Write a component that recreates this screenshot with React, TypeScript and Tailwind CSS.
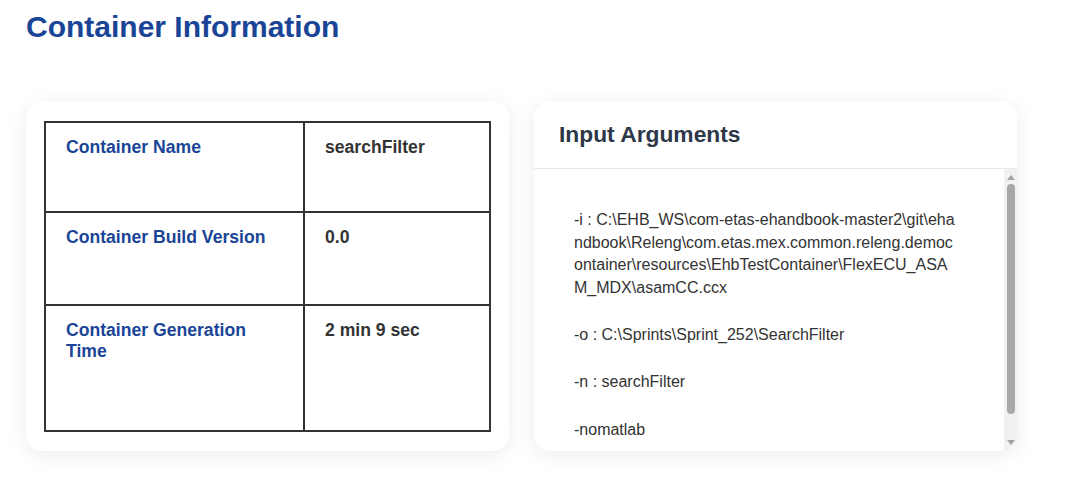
const rows = [
  { label: "Container Name", value: "searchFilter", h: "h-[88px]" },
  { label: "Container Build Version", value: "0.0", h: "h-[93px] border-t-2" },
  { label: "Container Generation Time", value: "2 min 9 sec", h: "h-[126px] border-t-2" },
];

// wrapped the same way the original break-all box wraps them
const args = [
  [
    "-i : C:\\EHB_WS\\com-etas-ehandbook-master2\\git\\eha",
    "ndbook\\Releng\\com.etas.mex.common.releng.democ",
    "ontainer\\resources\\EhbTestContainer\\FlexECU_ASA",
    "M_MDX\\asamCC.ccx",
  ],
  ["-o : C:\\Sprints\\Sprint_252\\SearchFilter"],
  ["-n : searchFilter"],
  ["-nomatlab"],
];

const App = () => {
  return (
    <div
      className="min-h-screen bg-white px-[26px] pt-[9px]"
      style={{ fontFamily: '"Liberation Sans", Arial, sans-serif' }}
    >
      <h1 className="text-[30px] font-bold leading-[1.2] text-[#1a4597]">
        Container Information
      </h1>

      <div className="mt-[56px] grid grid-cols-[483px_483px] grid-rows-[350px] gap-[25px]">
        {/* left card: details table */}
        <div className="rounded-2xl bg-white px-[18px] pt-5 pb-[19px] shadow-[0_4px_20px_rgba(0,0,0,0.08)]">
          <div className="border-2 border-[#333]">
            {rows.map((r) => (
              <div
                key={r.label}
                className={`grid grid-cols-[257px_1fr] border-[#333] ${r.h}`}
              >
                <div className="px-5 pt-[13.5px] text-[17.6px] font-bold leading-[1.2] text-[#1a4597]">
                  {r.label}
                </div>
                <div className="border-l-2 border-[#333] px-5 pt-[13.5px] text-[17.6px] font-bold leading-[1.2] text-[#333]">
                  {r.value}
                </div>
              </div>
            ))}
          </div>
        </div>

        {/* right card: input arguments */}
        <div className="flex min-h-0 flex-col overflow-hidden rounded-2xl bg-white shadow-[0_4px_20px_rgba(0,0,0,0.08)]">
          <div className="border-b border-[#e8e8e8] px-[25px] py-5">
            <h2 className="text-[22.8px] font-bold leading-[1.2] text-[#2d3748]">
              Input Arguments
            </h2>
          </div>
          <div className="flex min-h-0 flex-1">
            <div className="flex-1 overflow-hidden pl-10 pr-[40px] pt-[40px]">
              {args.map((lines) => (
                <p
                  key={lines[0]}
                  className="mb-[25px] whitespace-nowrap text-base leading-[1.4] text-[#333]"
                >
                  {lines.map((l) => (
                    <span key={l} className="block">
                      {l}
                    </span>
                  ))}
                </p>
              ))}
            </div>
            {/* scrollbar */}
            <div className="flex w-[13px] flex-col items-center bg-[#f1f1f1] py-[6px]">
              <div className="h-0 w-0 border-x-[4px] border-b-[5px] border-x-transparent border-b-[#a3a3a3]" />
              <div className="mt-[4px] h-[230px] w-[8px] rounded-full bg-[#a8a8a8]" />
              <div className="mt-auto h-0 w-0 border-x-[4px] border-t-[5px] border-x-transparent border-t-[#a3a3a3]" />
            </div>
          </div>
        </div>
      </div>
    </div>
  );
};

export default App;
